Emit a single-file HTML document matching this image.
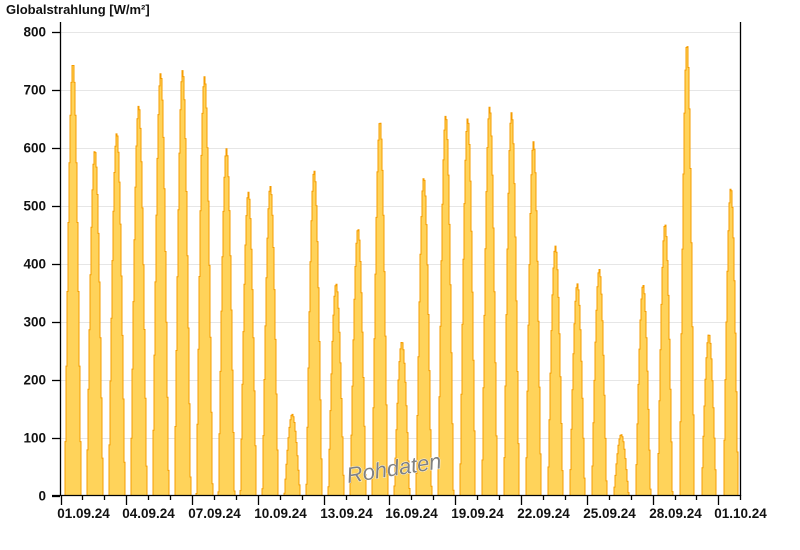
<!DOCTYPE html>
<html><head><meta charset="utf-8"><style>
html,body{margin:0;padding:0;background:#fff;}
body{width:800px;height:550px;overflow:hidden;}
svg{display:block;font-family:"Liberation Sans",Arial,sans-serif;}
</style></head><body>
<svg id="s" width="800" height="550" xmlns="http://www.w3.org/2000/svg">
<text x="6" y="14" font-size="13" font-weight="bold" fill="#111">Globalstrahlung [W/m²]</text>
<g id="grid" stroke="#e6e6e6" stroke-width="1"></g>
<g id="bars"></g>
<g id="axes" stroke="#000" stroke-width="1.3" fill="none">
<line x1="60.5" y1="22" x2="60.5" y2="496"/>
<line x1="740.5" y1="22" x2="740.5" y2="496"/>
<line x1="52" y1="495.5" x2="741" y2="495.5"/>
</g>
<g id="ylab" font-size="13.5" font-weight="bold" fill="#111" text-anchor="end"></g>
<g id="xlab" font-size="13.5" font-weight="bold" fill="#111" text-anchor="middle"></g>
<text x="0" y="0" transform="translate(348,483) rotate(-9)" font-size="22" font-style="italic" fill="#808080" stroke="#fff" stroke-width="0.8" paint-order="stroke">Rohdaten</text>
</svg>
<script>
var NS="http://www.w3.org/2000/svg";
function el(p,t,a,txt){var e=document.createElementNS(NS,t);for(var k in a)e.setAttribute(k,a[k]);if(txt!=null)e.textContent=txt;document.getElementById(p).appendChild(e);return e;}
var y0=495.5,sc=0.58;
for(var v=0;v<=800;v+=100){var y=y0-v*sc;
 if(v>0)el("grid","line",{x1:61,x2:740,y1:Math.round(y)+0.5,y2:Math.round(y)+0.5});
 el("ylab","text",{x:46,y:y+5},String(v));
 el("axes","line",{x1:52,x2:60,y1:Math.round(y)+0.5,y2:Math.round(y)+0.5});
}
var x0=60.5,dx=21.93;
var labs=["01.09.24","04.09.24","07.09.24","10.09.24","13.09.24","16.09.24","19.09.24","22.09.24","25.09.24","28.09.24","01.10.24"];
for(var d=0;d<=31;d++){var x=Math.round(x0+d*dx)+0.5;if(x>741)break;
 var maj=d%3==0;
 el("axes","line",{x1:x,x2:x,y1:495,y2:maj?505:500});
 if(maj)el("xlab","text",{x:x+22,y:518},labs[d/3]);
}
var pk=[745,595,625,672,728,733,722,598,523,533,140,560,365,460,645,265,548,655,650,670,660,610,430,365,390,105,363,468,778,278,530];
var path="";
for(var d=0;d<pk.length;d++){
 var c=x0+d*dx+12.5, hw=8.3-d*0.03;
 var pts=[];
 for(var x=Math.floor(c-hw);x<=Math.ceil(c+hw);x++){
  var t=(x+0.5-c)/hw; if(Math.abs(t)>=1)continue;
  var v=pk[d]*Math.pow(Math.cos(Math.PI/2*t),1.1);
  if(x>739)continue;
  pts.push([x,v]);
 }
 if(!pts.length)continue;
 var s="M"+pts[0][0]+" "+y0;
 pts.forEach(function(p){var y=(y0-p[1]*sc).toFixed(1);s+=" L"+p[0]+" "+y+" L"+(p[0]+1)+" "+y;});
 s+=" L"+(pts[pts.length-1][0]+1)+" "+y0+" Z";
 path+=s;
}
el("bars","path",{d:path,fill:"#ffd35a",stroke:"#f59c00","stroke-width":"1"});
</script>
</body></html>
